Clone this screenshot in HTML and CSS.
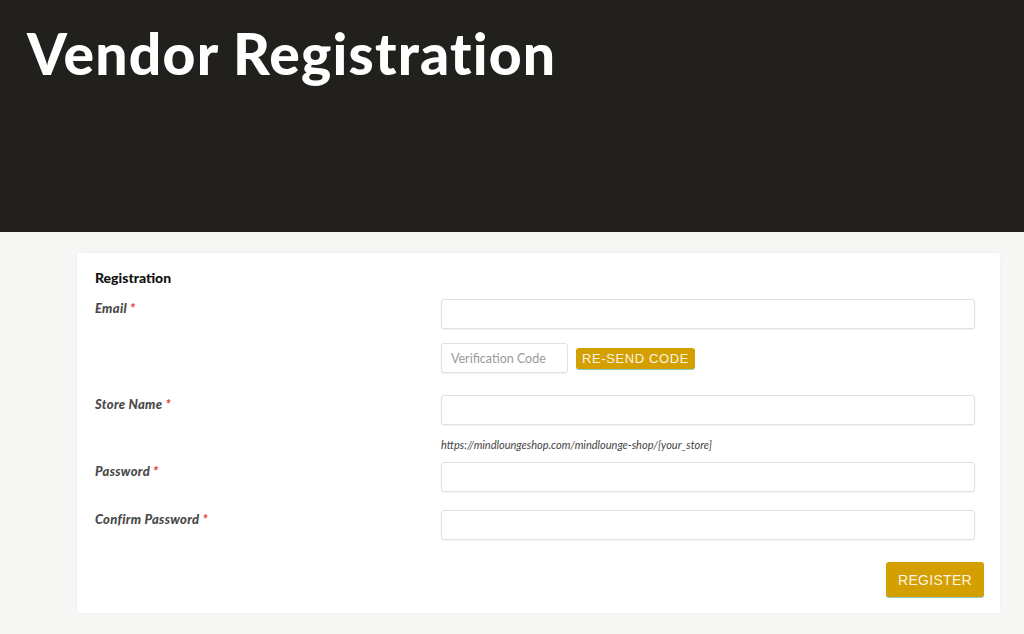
FILE: index.html
```html
<!DOCTYPE html>
<html lang="en">
<head>
<meta charset="utf-8">
<title>Vendor Registration</title>
<link rel="stylesheet" href="styles.css">
</head>
<body>
<header class="hero">
  <h1 class="hero-title">Vendor Registration</h1>
</header>
<main class="main">
  <form class="card">
    <h2 class="card-title">Registration</h2>
    <div class="row row-email">
      <label class="label">Email<span class="req">*</span></label>
      <div class="field">
        <input class="input" type="email">
        <div class="code-row">
          <input class="input input-code" type="text" placeholder="Verification Code">
          <button type="button" class="btn btn-small">RE-SEND CODE</button>
        </div>
      </div>
    </div>
    <div class="row row-store">
      <label class="label">Store Name<span class="req">*</span></label>
      <div class="field">
        <input class="input" type="text">
        <p class="hint">https://mindloungeshop.com/mindlounge-shop/[your_store]</p>
      </div>
    </div>
    <div class="row row-pass">
      <label class="label">Password<span class="req">*</span></label>
      <div class="field">
        <input class="input" type="password">
      </div>
    </div>
    <div class="row row-confirm">
      <label class="label">Confirm Password<span class="req">*</span></label>
      <div class="field">
        <input class="input" type="password">
      </div>
    </div>
    <div class="actions">
      <button type="button" class="btn btn-register">REGISTER</button>
    </div>
  </form>
</main>
</body>
</html>
```

FILE: styles.css
```css
* { box-sizing: border-box; }
html, body { margin: 0; padding: 0; }
body {
  background: #f7f7f6;
  font-family: "Lato", "Noto Sans", sans-serif;
  color: #222;
  height: 634px;
  overflow: hidden;
}
.hero {
  background: #22201d;
  height: 232px;
  padding: 18px 0 0 27px;
}
.hero-title {
  margin: 0;
  color: #fff;
  font-size: 57px;
  font-weight: 900;
  line-height: 70px;
  letter-spacing: 1.2px;
}
.main {
  padding: 21px 24px 0 77px;
}
.card {
  background: #fff;
  border-radius: 3px;
  box-shadow: 0 0 6px rgba(0,0,0,0.04);
  padding: 17px 16px 16px 18px;
  height: 360px;
}
.card-title {
  margin: 0 0 13px;
  font-size: 14px;
  line-height: 16px;
  font-weight: 900;
  color: #111;
}
.row {
  display: grid;
  grid-template-columns: 346px 534px;
}
.row-store { margin-top: 22px; }
.row-pass { margin-top: 10px; }
.row-confirm { margin-top: 18px; }
.label {
  padding-top: 2px;
  font-size: 13px;
  line-height: 14px;
  font-weight: 900;
  font-style: italic;
  letter-spacing: 0.3px;
  color: #4a4a4a;
}
.req { color: #e53935; margin-left: 3px; }
.field { display: flex; flex-direction: column; }
.input {
  display: block;
  width: 100%;
  height: 30px;
  border: 1px solid #e0e0e0;
  border-radius: 3px;
  box-shadow: 0 1px 2px rgba(0,0,0,0.06);
  background: #fff;
  padding: 0 9px;
  font-family: inherit;
  font-size: 12.5px;
}
.input::placeholder { color: #9a9a9a; }
.code-row {
  display: flex;
  align-items: center;
  gap: 8px;
  margin-top: 14px;
}
.input-code { width: 127px; }
.btn {
  border: 0;
  background: #d49f00;
  color: #fbf4e0;
  font-family: "Liberation Sans", Arial, sans-serif;
  border-radius: 3px;
  cursor: pointer;
}
.btn-small {
  height: 21px;
  width: 119px;
  padding: 0;
  font-size: 13px;
  letter-spacing: 0.6px;
  box-shadow: 0 1px 0 #8fc7c4;
}
.hint {
  margin: 13px 0 0;
  font-size: 11px;
  line-height: 14px;
  font-style: italic;
  color: #444;
}
.actions {
  display: flex;
  justify-content: flex-end;
  margin-top: 22px;
}
.btn-register {
  height: 35px;
  width: 98px;
  font-size: 14px;
  letter-spacing: 0.3px;
  box-shadow: 0 1px 0 #8fc7c4;
}
```
